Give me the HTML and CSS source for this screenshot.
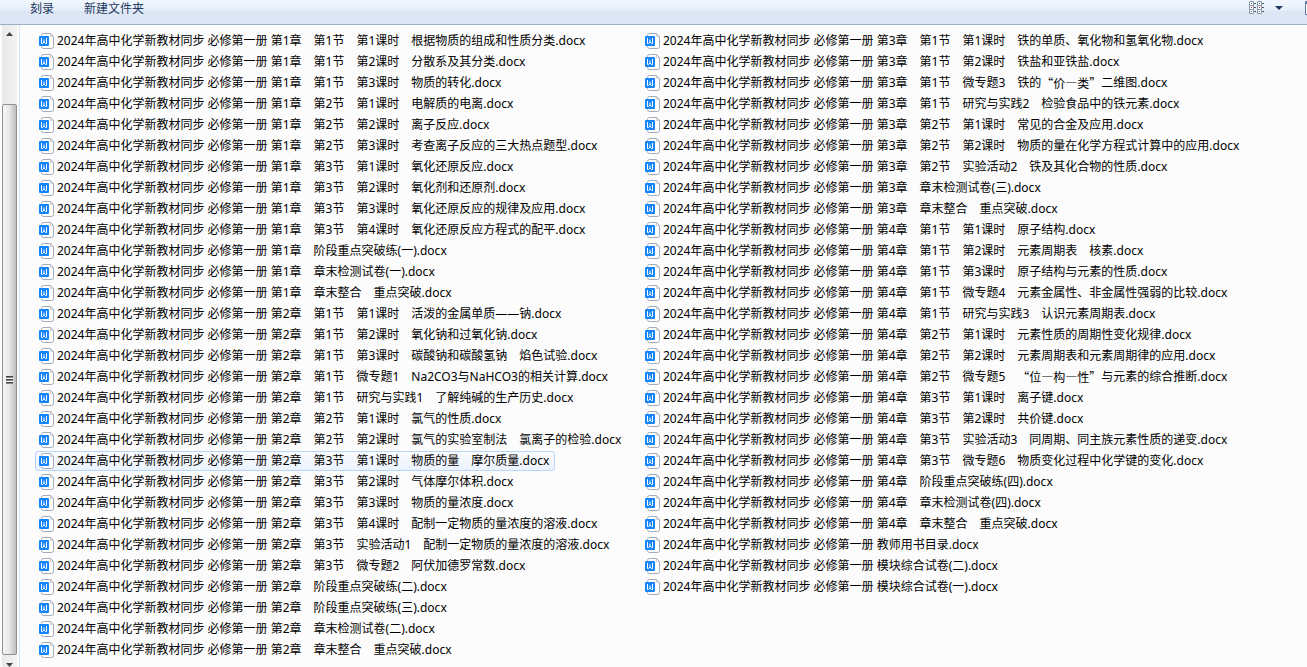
FILE: index.html
```
<!DOCTYPE html>
<html lang="zh-CN">
<head>
  <meta charset="UTF-8" />
  <title>2024年高中化学新教材同步 必修第一册</title>
  <link rel="stylesheet" href="styles.css">
</head>
<body>
  <svg class="symbols" aria-hidden="true">
    <symbol id="doc" viewBox="0 0 16 16">
      <path d="M3.500 2.500q0-2 2-2h7l3 3v10q0 2-2 2h-8q-2 0-2-2z" fill="#fff" stroke="#a3abb8" />
      <path d="M12.500 1v2.500h2.500" fill="none" stroke="#c9ced6" />
      <rect x="1" y="3" width="10" height="10" rx="1" fill="#1485fb" />
      <path d="M3.500 5v5.500h1L6 9l1.500 1.500h1V5M6 6.500V9" fill="none" stroke="#fff" />
    </symbol>
  </svg>

  <header class="toolbar">
    <button type="button" class="command">刻录</button>
    <button type="button" class="command">新建文件夹</button>
    <div class="view-tools">
      <button type="button" class="tool" aria-label="更改您的视图">
        <svg width="16" height="14" viewBox="0 0 16 14">
          <g fill="#fff" stroke="#8a97a8">
            <path d="M.5 .5h4v4h-4zM.5 4.500h4v4h-4zM.5 8.500h4v4h-4zM8.500 .5h4v4h-4zM8.500 4.500h4v4h-4zM8.500 8.500h4v4h-4z" />
            <path d="M5 2.500h2M5 6.500h2M5 10.500h2M13 2.500h2M13 6.500h2M13 10.500h2" stroke="#4b5c72" />
          </g>
          <path d="M2 2h1v1h-1zM10 2h1v1h-1zM2 10h1v1h-1zM10 10h1v1h-1z" fill="#3c6aa0" />
          <path d="M2 6h1v1h-1zM10 6h1v1h-1z" fill="#b03030" />
        </svg>
      </button>
      <button type="button" class="tool" aria-label="更多选项">
        <svg width="8" height="4" viewBox="0 0 8 4"><path d="M0 0h8L4 4z" fill="#1e395b" /></svg>
      </button>
      <button type="button" class="tool preview" aria-label="显示预览窗格">
        <svg width="16" height="14" viewBox="0 0 16 14"><path d="M.5 .5h15v13h-15z" fill="#fff" stroke="#5a7ba6" /><path d="M1 2h14" stroke="#5a7ba6" stroke-width="2" /></svg>
      </button>
    </div>
  </header>

  <main class="content">
    <div class="scrollbar" aria-hidden="true">
      <svg class="arrow" width="7" height="4" viewBox="0 0 7 4"><path d="M0 4h7L3.500 0z" fill="#444" /></svg>
      <div class="thumb"><span class="grip"></span></div>
      <svg class="arrow" width="7" height="4" viewBox="0 0 7 4"><path d="M0 0h7L3.500 4z" fill="#444" /></svg>
    </div>

    <ul class="files">
      <li><a class="file" href="#"><svg class="icon"><use href="#doc" /></svg>2024年高中化学新教材同步 必修第一册 第1章　第1节　第1课时　根据物质的组成和性质分类.docx</a></li>
      <li><a class="file" href="#"><svg class="icon"><use href="#doc" /></svg>2024年高中化学新教材同步 必修第一册 第1章　第1节　第2课时　分散系及其分类.docx</a></li>
      <li><a class="file" href="#"><svg class="icon"><use href="#doc" /></svg>2024年高中化学新教材同步 必修第一册 第1章　第1节　第3课时　物质的转化.docx</a></li>
      <li><a class="file" href="#"><svg class="icon"><use href="#doc" /></svg>2024年高中化学新教材同步 必修第一册 第1章　第2节　第1课时　电解质的电离.docx</a></li>
      <li><a class="file" href="#"><svg class="icon"><use href="#doc" /></svg>2024年高中化学新教材同步 必修第一册 第1章　第2节　第2课时　离子反应.docx</a></li>
      <li><a class="file" href="#"><svg class="icon"><use href="#doc" /></svg>2024年高中化学新教材同步 必修第一册 第1章　第2节　第3课时　考查离子反应的三大热点题型.docx</a></li>
      <li><a class="file" href="#"><svg class="icon"><use href="#doc" /></svg>2024年高中化学新教材同步 必修第一册 第1章　第3节　第1课时　氧化还原反应.docx</a></li>
      <li><a class="file" href="#"><svg class="icon"><use href="#doc" /></svg>2024年高中化学新教材同步 必修第一册 第1章　第3节　第2课时　氧化剂和还原剂.docx</a></li>
      <li><a class="file" href="#"><svg class="icon"><use href="#doc" /></svg>2024年高中化学新教材同步 必修第一册 第1章　第3节　第3课时　氧化还原反应的规律及应用.docx</a></li>
      <li><a class="file" href="#"><svg class="icon"><use href="#doc" /></svg>2024年高中化学新教材同步 必修第一册 第1章　第3节　第4课时　氧化还原反应方程式的配平.docx</a></li>
      <li><a class="file" href="#"><svg class="icon"><use href="#doc" /></svg>2024年高中化学新教材同步 必修第一册 第1章　阶段重点突破练(一).docx</a></li>
      <li><a class="file" href="#"><svg class="icon"><use href="#doc" /></svg>2024年高中化学新教材同步 必修第一册 第1章　章末检测试卷(一).docx</a></li>
      <li><a class="file" href="#"><svg class="icon"><use href="#doc" /></svg>2024年高中化学新教材同步 必修第一册 第1章　章末整合　重点突破.docx</a></li>
      <li><a class="file" href="#"><svg class="icon"><use href="#doc" /></svg>2024年高中化学新教材同步 必修第一册 第2章　第1节　第1课时　活泼的金属单质——钠.docx</a></li>
      <li><a class="file" href="#"><svg class="icon"><use href="#doc" /></svg>2024年高中化学新教材同步 必修第一册 第2章　第1节　第2课时　氧化钠和过氧化钠.docx</a></li>
      <li><a class="file" href="#"><svg class="icon"><use href="#doc" /></svg>2024年高中化学新教材同步 必修第一册 第2章　第1节　第3课时　碳酸钠和碳酸氢钠　焰色试验.docx</a></li>
      <li><a class="file" href="#"><svg class="icon"><use href="#doc" /></svg>2024年高中化学新教材同步 必修第一册 第2章　第1节　微专题1　Na2CO3与NaHCO3的相关计算.docx</a></li>
      <li><a class="file" href="#"><svg class="icon"><use href="#doc" /></svg>2024年高中化学新教材同步 必修第一册 第2章　第1节　研究与实践1　了解纯碱的生产历史.docx</a></li>
      <li><a class="file" href="#"><svg class="icon"><use href="#doc" /></svg>2024年高中化学新教材同步 必修第一册 第2章　第2节　第1课时　氯气的性质.docx</a></li>
      <li><a class="file" href="#"><svg class="icon"><use href="#doc" /></svg>2024年高中化学新教材同步 必修第一册 第2章　第2节　第2课时　氯气的实验室制法　氯离子的检验.docx</a></li>
      <li><a class="file active" href="#"><svg class="icon"><use href="#doc" /></svg>2024年高中化学新教材同步 必修第一册 第2章　第3节　第1课时　物质的量　摩尔质量.docx</a></li>
      <li><a class="file" href="#"><svg class="icon"><use href="#doc" /></svg>2024年高中化学新教材同步 必修第一册 第2章　第3节　第2课时　气体摩尔体积.docx</a></li>
      <li><a class="file" href="#"><svg class="icon"><use href="#doc" /></svg>2024年高中化学新教材同步 必修第一册 第2章　第3节　第3课时　物质的量浓度.docx</a></li>
      <li><a class="file" href="#"><svg class="icon"><use href="#doc" /></svg>2024年高中化学新教材同步 必修第一册 第2章　第3节　第4课时　配制一定物质的量浓度的溶液.docx</a></li>
      <li><a class="file" href="#"><svg class="icon"><use href="#doc" /></svg>2024年高中化学新教材同步 必修第一册 第2章　第3节　实验活动1　配制一定物质的量浓度的溶液.docx</a></li>
      <li><a class="file" href="#"><svg class="icon"><use href="#doc" /></svg>2024年高中化学新教材同步 必修第一册 第2章　第3节　微专题2　阿伏加德罗常数.docx</a></li>
      <li><a class="file" href="#"><svg class="icon"><use href="#doc" /></svg>2024年高中化学新教材同步 必修第一册 第2章　阶段重点突破练(二).docx</a></li>
      <li><a class="file" href="#"><svg class="icon"><use href="#doc" /></svg>2024年高中化学新教材同步 必修第一册 第2章　阶段重点突破练(三).docx</a></li>
      <li><a class="file" href="#"><svg class="icon"><use href="#doc" /></svg>2024年高中化学新教材同步 必修第一册 第2章　章末检测试卷(二).docx</a></li>
      <li><a class="file" href="#"><svg class="icon"><use href="#doc" /></svg>2024年高中化学新教材同步 必修第一册 第2章　章末整合　重点突破.docx</a></li>
      <li><a class="file" href="#"><svg class="icon"><use href="#doc" /></svg>2024年高中化学新教材同步 必修第一册 第3章　第1节　第1课时　铁的单质、氧化物和氢氧化物.docx</a></li>
      <li><a class="file" href="#"><svg class="icon"><use href="#doc" /></svg>2024年高中化学新教材同步 必修第一册 第3章　第1节　第2课时　铁盐和亚铁盐.docx</a></li>
      <li><a class="file" href="#"><svg class="icon"><use href="#doc" /></svg>2024年高中化学新教材同步 必修第一册 第3章　第1节　微专题3　铁的<span class="wide">“价—类”</span>二维图.docx</a></li>
      <li><a class="file" href="#"><svg class="icon"><use href="#doc" /></svg>2024年高中化学新教材同步 必修第一册 第3章　第1节　研究与实践2　检验食品中的铁元素.docx</a></li>
      <li><a class="file" href="#"><svg class="icon"><use href="#doc" /></svg>2024年高中化学新教材同步 必修第一册 第3章　第2节　第1课时　常见的合金及应用.docx</a></li>
      <li><a class="file" href="#"><svg class="icon"><use href="#doc" /></svg>2024年高中化学新教材同步 必修第一册 第3章　第2节　第2课时　物质的量在化学方程式计算中的应用.docx</a></li>
      <li><a class="file" href="#"><svg class="icon"><use href="#doc" /></svg>2024年高中化学新教材同步 必修第一册 第3章　第2节　实验活动2　铁及其化合物的性质.docx</a></li>
      <li><a class="file" href="#"><svg class="icon"><use href="#doc" /></svg>2024年高中化学新教材同步 必修第一册 第3章　章末检测试卷(三).docx</a></li>
      <li><a class="file" href="#"><svg class="icon"><use href="#doc" /></svg>2024年高中化学新教材同步 必修第一册 第3章　章末整合　重点突破.docx</a></li>
      <li><a class="file" href="#"><svg class="icon"><use href="#doc" /></svg>2024年高中化学新教材同步 必修第一册 第4章　第1节　第1课时　原子结构.docx</a></li>
      <li><a class="file" href="#"><svg class="icon"><use href="#doc" /></svg>2024年高中化学新教材同步 必修第一册 第4章　第1节　第2课时　元素周期表　核素.docx</a></li>
      <li><a class="file" href="#"><svg class="icon"><use href="#doc" /></svg>2024年高中化学新教材同步 必修第一册 第4章　第1节　第3课时　原子结构与元素的性质.docx</a></li>
      <li><a class="file" href="#"><svg class="icon"><use href="#doc" /></svg>2024年高中化学新教材同步 必修第一册 第4章　第1节　微专题4　元素金属性、非金属性强弱的比较.docx</a></li>
      <li><a class="file" href="#"><svg class="icon"><use href="#doc" /></svg>2024年高中化学新教材同步 必修第一册 第4章　第1节　研究与实践3　认识元素周期表.docx</a></li>
      <li><a class="file" href="#"><svg class="icon"><use href="#doc" /></svg>2024年高中化学新教材同步 必修第一册 第4章　第2节　第1课时　元素性质的周期性变化规律.docx</a></li>
      <li><a class="file" href="#"><svg class="icon"><use href="#doc" /></svg>2024年高中化学新教材同步 必修第一册 第4章　第2节　第2课时　元素周期表和元素周期律的应用.docx</a></li>
      <li><a class="file" href="#"><svg class="icon"><use href="#doc" /></svg>2024年高中化学新教材同步 必修第一册 第4章　第2节　微专题5　<span class="wide">“位—构—性”</span>与元素的综合推断.docx</a></li>
      <li><a class="file" href="#"><svg class="icon"><use href="#doc" /></svg>2024年高中化学新教材同步 必修第一册 第4章　第3节　第1课时　离子键.docx</a></li>
      <li><a class="file" href="#"><svg class="icon"><use href="#doc" /></svg>2024年高中化学新教材同步 必修第一册 第4章　第3节　第2课时　共价键.docx</a></li>
      <li><a class="file" href="#"><svg class="icon"><use href="#doc" /></svg>2024年高中化学新教材同步 必修第一册 第4章　第3节　实验活动3　同周期、同主族元素性质的递变.docx</a></li>
      <li><a class="file" href="#"><svg class="icon"><use href="#doc" /></svg>2024年高中化学新教材同步 必修第一册 第4章　第3节　微专题6　物质变化过程中化学键的变化.docx</a></li>
      <li><a class="file" href="#"><svg class="icon"><use href="#doc" /></svg>2024年高中化学新教材同步 必修第一册 第4章　阶段重点突破练(四).docx</a></li>
      <li><a class="file" href="#"><svg class="icon"><use href="#doc" /></svg>2024年高中化学新教材同步 必修第一册 第4章　章末检测试卷(四).docx</a></li>
      <li><a class="file" href="#"><svg class="icon"><use href="#doc" /></svg>2024年高中化学新教材同步 必修第一册 第4章　章末整合　重点突破.docx</a></li>
      <li><a class="file" href="#"><svg class="icon"><use href="#doc" /></svg>2024年高中化学新教材同步 必修第一册 教师用书目录.docx</a></li>
      <li><a class="file" href="#"><svg class="icon"><use href="#doc" /></svg>2024年高中化学新教材同步 必修第一册 模块综合试卷(二).docx</a></li>
      <li><a class="file" href="#"><svg class="icon"><use href="#doc" /></svg>2024年高中化学新教材同步 必修第一册 模块综合试卷(一).docx</a></li>
    </ul>
  </main>
</body>
</html>
```

FILE: styles.css
```
* {
  box-sizing: border-box;
}
body {
  margin: 0;
  height: 100vh;
  display: flex;
  flex-direction: column;
  overflow: hidden;
  background: #fcfcfc;
  color: #000;
  font-family: "Noto Sans", "Noto Sans CJK SC", sans-serif;
  font-size: 12px;
  line-height: 18px;
}
.symbols {
  display: none;
}
.toolbar {
  display: flex;
  align-items: flex-start;
  flex-shrink: 0;
  gap: 30px;
  height: 25px;
  padding-left: 30px;
  background: linear-gradient(#f2f7fe, #e6effa 10px, #dce6f4 11px, #dde8f7);
  border-bottom: 1px solid #a0afc3;
}
button {
  padding: 0;
  border: none;
  background: none;
  font: inherit;
  color: #1e395b;
  cursor: pointer;
}
.view-tools {
  display: flex;
  gap: 10px;
  margin-left: auto;
  overflow: hidden;
}
.tool {
  display: flex;
  align-items: center;
  height: 16px;
}
.preview {
  width: 2px;
  margin-left: 12px;
  overflow: hidden;
}
.preview svg {
  flex-shrink: 0;
}
.content {
  display: flex;
  flex: 1;
  min-height: 0;
}
.scrollbar {
  display: flex;
  flex-direction: column;
  align-items: center;
  flex-shrink: 0;
  width: 20px;
  padding: 7px 2px 0 2px;
  background: linear-gradient(to right, #fcfcfc 2px, #e9e9e9 2px, #f2f2f2 17px, #fcfcfc 17px);
  border-right: 1px solid #d6e5f5;
}
.arrow {
  flex-shrink: 0;
}
.thumb {
  display: flex;
  align-items: center;
  justify-content: center;
  flex: 1;
  width: 15px;
  margin: 68px 0 8px;
  border: 1px solid #8f8f8f;
  border-radius: 2px;
  background: linear-gradient(to right, #f7f7f7, #e6e6e6 50%, #bdbdbd);
}
.grip {
  width: 7px;
  height: 8px;
  background: repeating-linear-gradient(#444 0 1px, #888 1px 2px, #fff 2px 3px);
}
.files {
  display: grid;
  grid-auto-flow: column;
  grid-template-rows: repeat(30, 20px);
  grid-auto-columns: 606px;
  row-gap: 1px;
  margin: 0;
  padding: 6px 0 0 15px;
  list-style: none;
}
.file {
  display: inline-flex;
  align-items: center;
  height: 20px;
  padding: 0 5px 0 2px;
  border: 1px solid transparent;
  border-radius: 3px;
  color: #000;
  text-decoration: none;
  white-space: pre;
}
.file:hover,
.active {
  border-color: #b8d6fb;
  background: linear-gradient(#fafbfd, #ebf3fd);
}
.icon {
  width: 16px;
  height: 16px;
  margin-right: 3px;
}
/* full-width quotes and dashes */
.wide {
  font-family: "Noto Sans CJK SC", sans-serif;
}
```
